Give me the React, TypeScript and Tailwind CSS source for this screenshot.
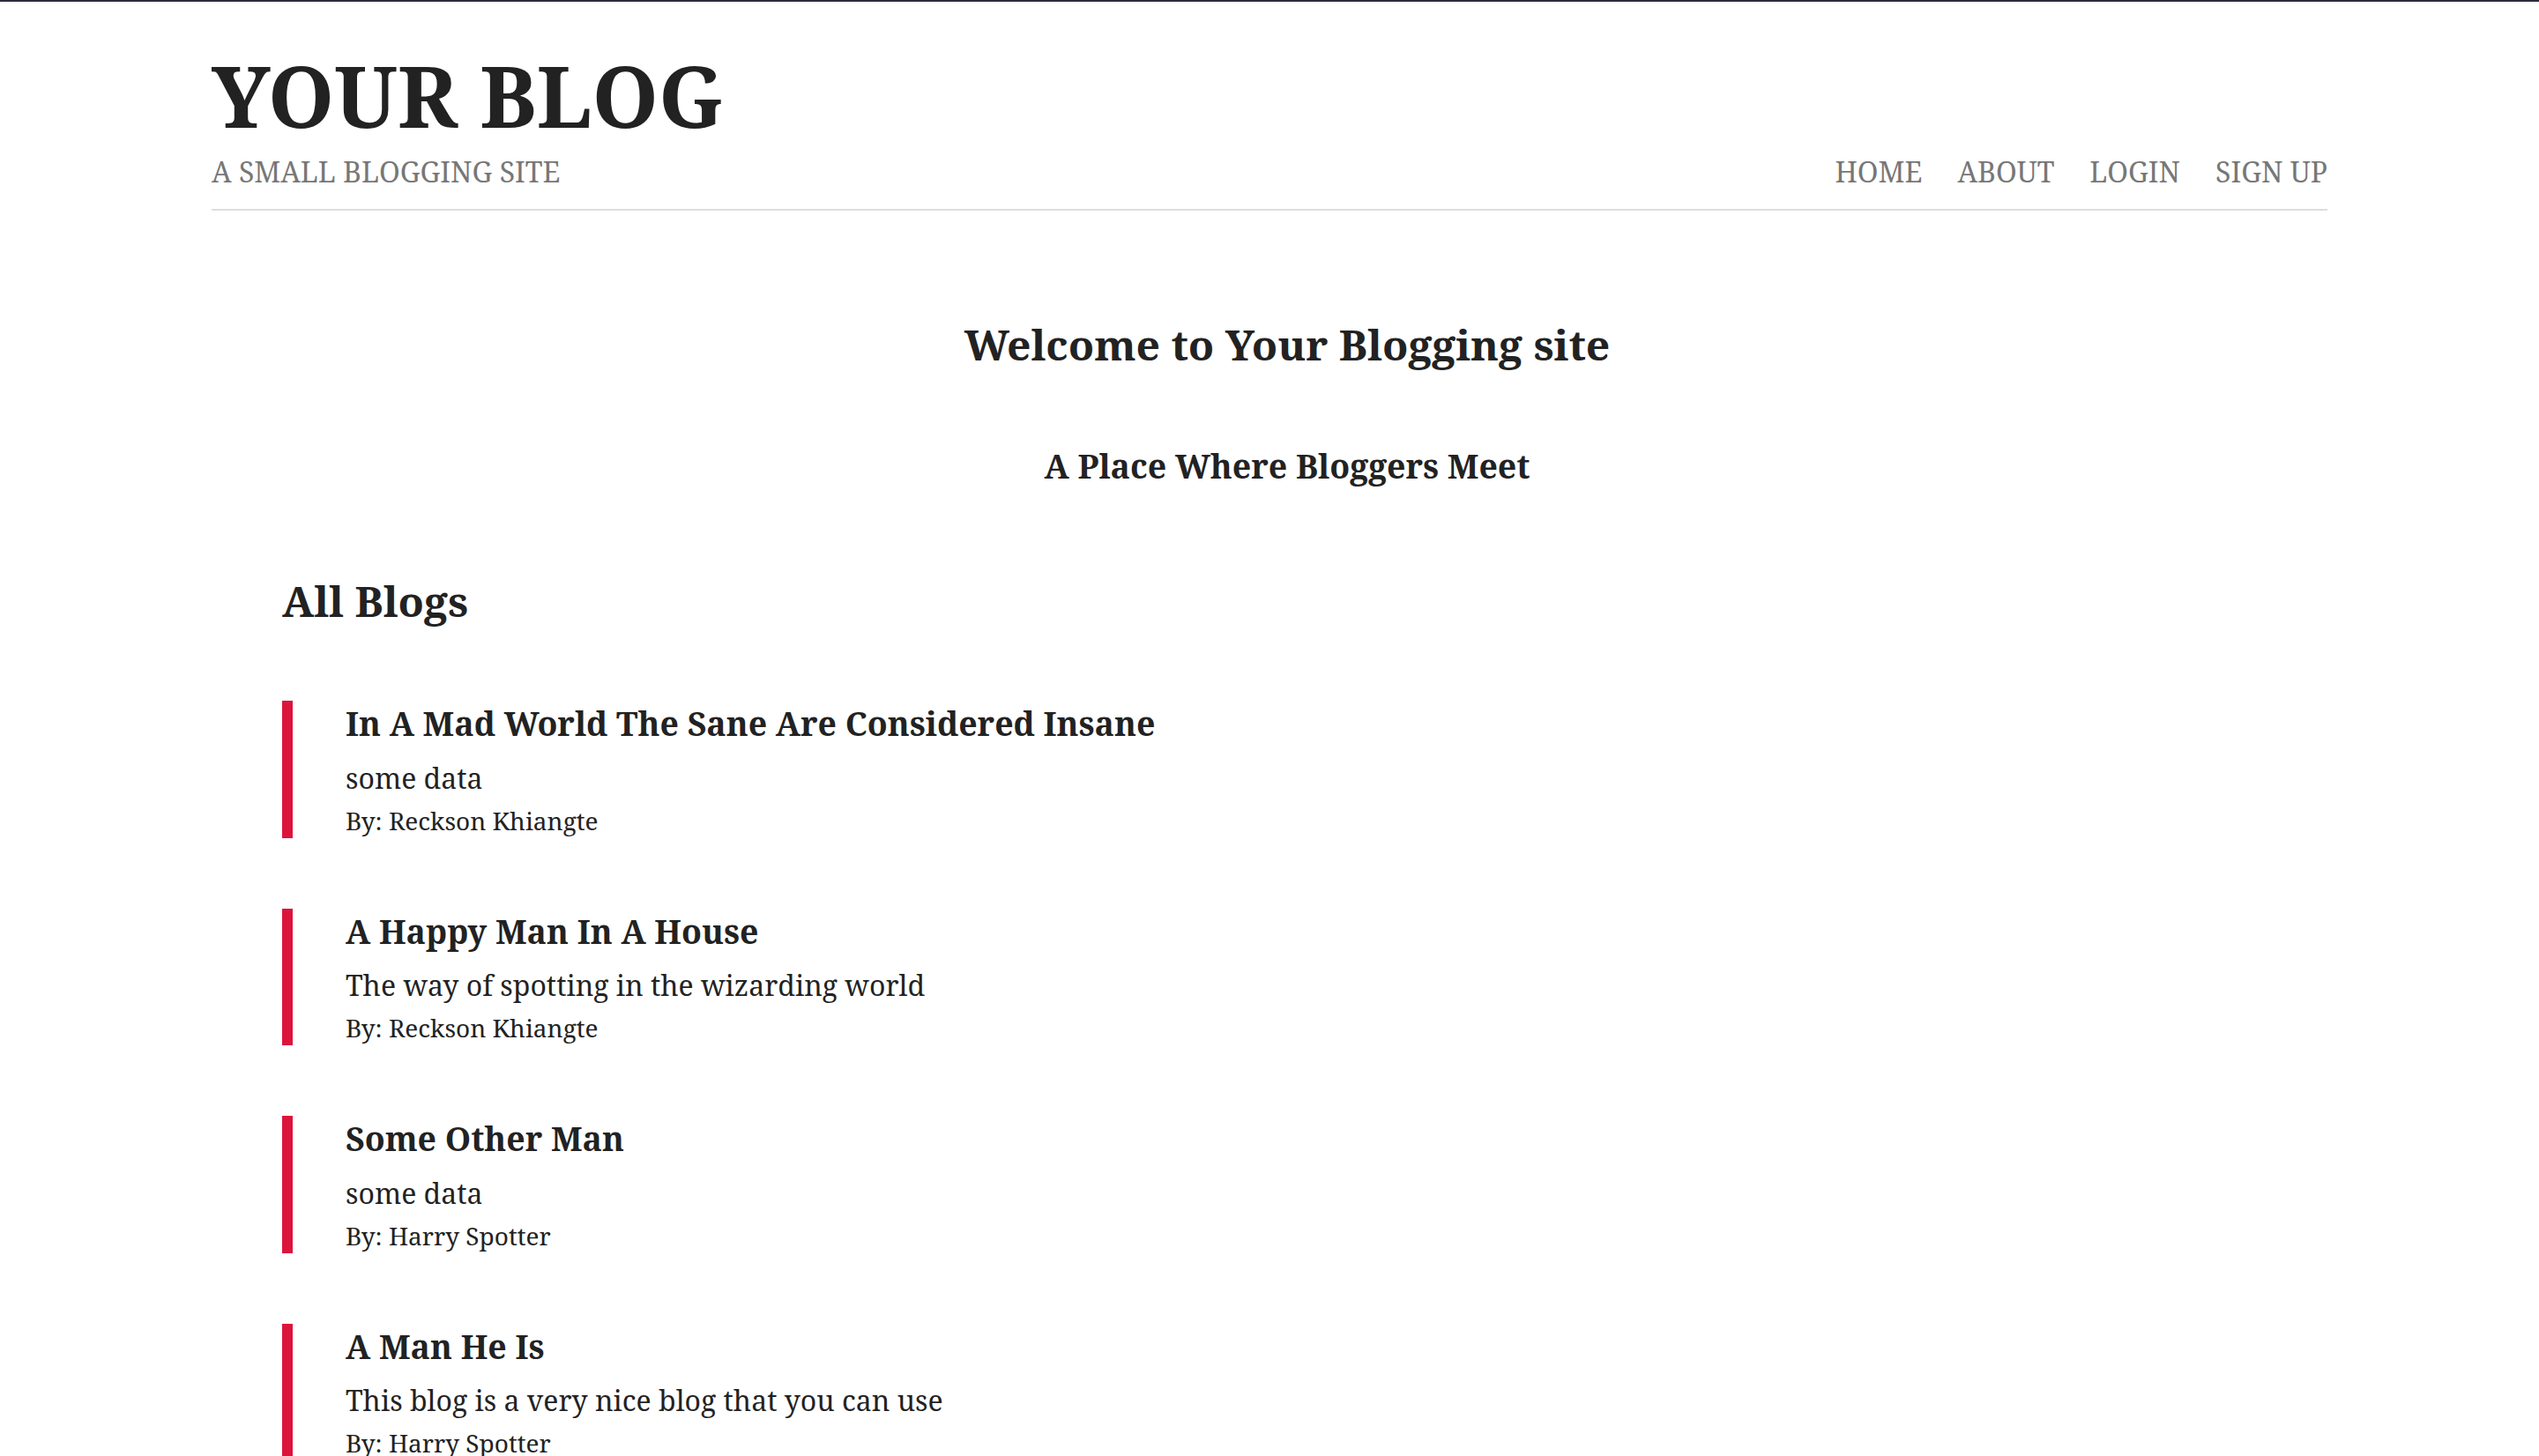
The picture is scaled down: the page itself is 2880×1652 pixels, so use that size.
const blogs = [
  { title: "In A Mad World The Sane Are Considered Insane", body: "some data", author: "Reckson Khiangte" },
  { title: "A Happy Man In A House", body: "The way of spotting in the wizarding world", author: "Reckson Khiangte" },
  { title: "Some Other Man", body: "some data", author: "Harry Spotter" },
  { title: "A Man He Is", body: "This blog is a very nice blog that you can use", author: "Harry Spotter" },
];

const navLinks = ["HOME", "ABOUT", "LOGIN", "SIGN UP"];

export default function App() {
  return (
    <div
      className="min-h-screen bg-white text-[#222222] border-t-2 border-[#2b2c3b]"
      style={{ fontFamily: '"Noto Serif", "DejaVu Serif", serif' }}
    >
      {/* header */}
      <header className="mx-[240px] pt-[58px] pb-[26px] border-b-2 border-[#dddddd]">
        <h1 className="text-[96px] leading-none font-bold">YOUR BLOG</h1>
        <div className="mt-[23px] flex items-end justify-between text-[32px] leading-none text-[#777777]">
          <p>A SMALL BLOGGING SITE</p>
          <nav className="flex gap-[40px]">
            {navLinks.map((link) => (
              <a key={link} href="#" className="hover:text-[#222222]">
                {link}
              </a>
            ))}
          </nav>
        </div>
      </header>

      {/* main content */}
      <main className="ml-[320px] mr-[280px] pb-10">
        <section className="text-center">
          <h2 className="mt-[128px] text-[48px] leading-none font-bold">Welcome to Your Blogging site</h2>
          <h3 className="mt-[95px] text-[37.44px] leading-none font-bold">A Place Where Bloggers Meet</h3>
        </section>

        <h2 className="mt-[111px] text-[48px] leading-none font-bold">All Blogs</h2>

        <div className="mt-[89px] flex flex-col gap-[80px]">
          {blogs.map((blog) => (
            <article key={blog.title} className="border-l-[12px] border-[#dc143c] pl-[60px] pt-[7px] pb-[6px]">
              <h3 className="text-[37.44px] leading-none font-bold">{blog.title}</h3>
              <p className="mt-[27px] text-[32px] leading-none">{blog.body}</p>
              <p className="mt-[18px] text-[28px] leading-none">By: {blog.author}</p>
            </article>
          ))}
        </div>
      </main>
    </div>
  );
}
